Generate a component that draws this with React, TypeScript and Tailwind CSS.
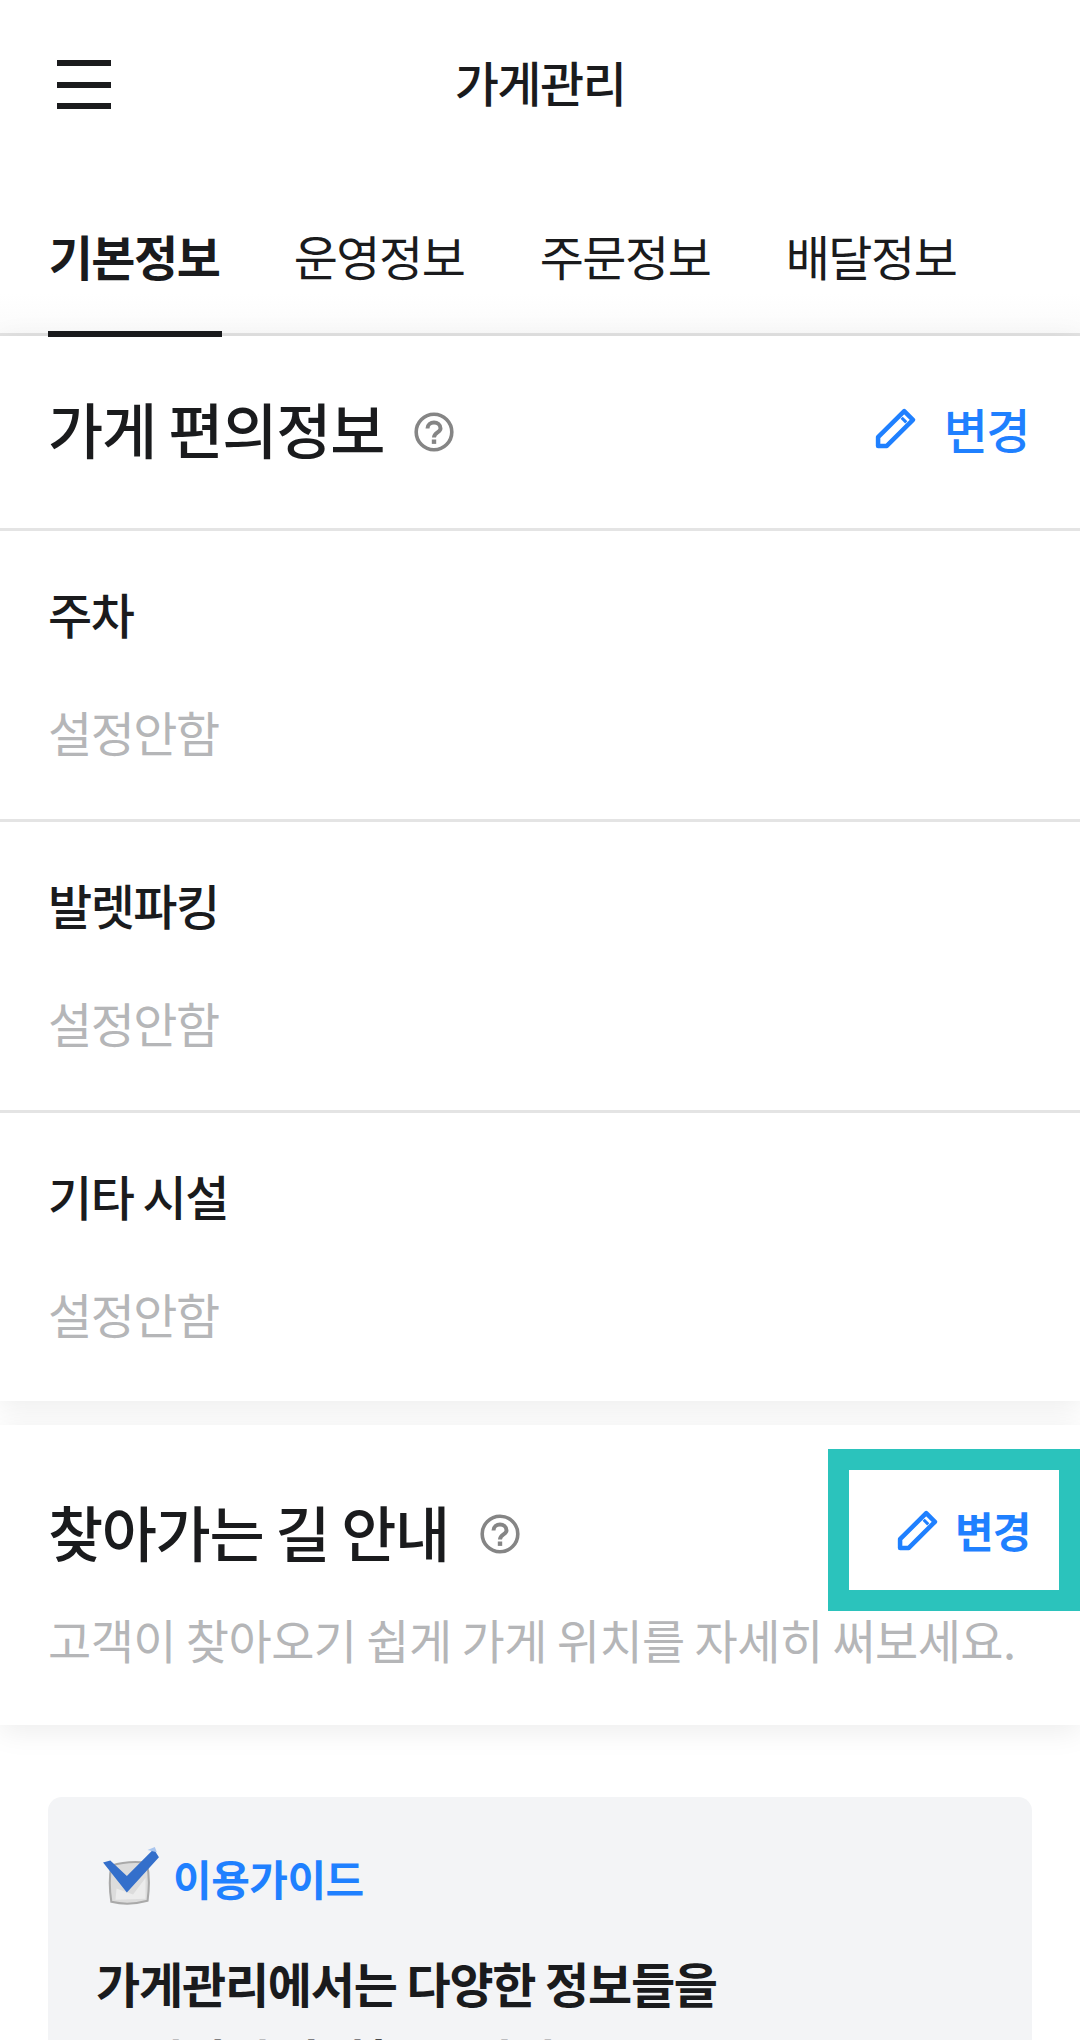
const KR = "font-['Noto_Sans_CJK_KR',sans-serif]";

function Pencil({ className }: { className: string }) {
  return (
    <svg viewBox="0 0 40 40" className={className} fill="none" stroke="#1f80ff" strokeWidth="4.4" strokeLinejoin="round">
      <path d="M3 28.5 L28.5 3 L37 11.5 L11.5 37 H3 Z" />
      <path d="M26 9.5 L30.5 14" strokeWidth="3" />
    </svg>
  );
}

function Help() {
  return (
    <svg viewBox="0 0 40 40" className="w-10 h-10" fill="none">
      <circle cx="20" cy="20" r="17.8" stroke="#858585" strokeWidth="3.6" />
      <path d="M13.5 16.5 C13.5 8.5 26.5 8.5 26.5 16.5 C26.5 20.5 20 20.5 20 25.5" stroke="#858585" strokeWidth="4" />
      <rect x="17.8" y="27.5" width="4.4" height="4.4" fill="#858585" />
    </svg>
  );
}

function CheckIcon() {
  return (
    <svg viewBox="0 0 56 58" className="w-[58px] h-[60px] shrink-0">
      <path d="M9 18 Q24 13 43 15 Q47 30 44 52 Q26 57 9 53 Q6 34 9 18 Z" fill="#dcdcdc" stroke="#a9a9a9" strokeWidth="2" />
      <path d="M14 40 L30 46 L42 30 L42 50 L13 51 Z" fill="#ececec" />
      <path d="M1 15 L8 13 L24 28 L50 2 L55 10 L24 44 Z" fill="#346fcb" />
      <path d="M44 3 L51 0 L53 5 Z" fill="#a9c5ee" />
    </svg>
  );
}

function Field({ label, h }: { label: string; h: string }) {
  return (
    <div className={`${h} px-12 pt-[50px] border-b-[3px] border-[#e4e4e4] last:border-b-0`}>
      <div className="text-[48px] leading-[64px] font-medium text-[#1a1b1d] tracking-[-1.5px]">{label}</div>
      <div className="mt-[54px] text-[48px] leading-[64px] text-[#b5b6b8] tracking-[-1.5px]">설정안함</div>
    </div>
  );
}

export default function App() {
  return (
    <div className={`${KR} w-[1080px] h-[2040px] overflow-hidden bg-white text-[#1a1b1d]`}>
      <header className="relative h-[168px] flex items-center justify-center">
        <div className="absolute left-[57px] top-[60px] w-[54px] h-[49px] flex flex-col justify-between">
          <div className="h-[6px] bg-[#1a1b1d]" />
          <div className="h-[6px] bg-[#1a1b1d]" />
          <div className="h-[6px] bg-[#1a1b1d]" />
        </div>
        <h1 className="text-[48px] leading-[64px] font-medium tracking-[-1.5px] -mt-[6px]">가게관리</h1>
      </header>

      <nav className="h-[168px] flex px-12 gap-[74px] text-[48px] tracking-[-1.5px] relative bg-gradient-to-b from-white from-75% to-[#fafafa]">
        <div className="absolute left-0 right-0 bottom-0 h-[3px] bg-[#e2e2e2]" />
        <div className="relative pt-[55px] font-bold leading-[64px] w-[174px] -mr-[3px] text-center">
          <span className="-ml-[2px]">기본정보</span>
          <div className="absolute left-0 right-0 -bottom-px h-[6px] bg-[#1a1b1d]" />
        </div>
        {["운영정보", "주문정보", "배달정보"].map((t) => (
          <div key={t} className="pt-[55px] leading-[64px] w-[172px] text-center">{t}</div>
        ))}
      </nav>

      <section className="shadow-[0_6px_28px_rgba(0,0,0,0.08)] relative">
        <div className="h-[195px] flex items-center px-12 border-b-[3px] border-[#e4e4e4]">
          <h2 className="text-[60px] leading-[72px] font-medium tracking-[-1.2px] -mt-[9px]">가게 편의정보</h2>
          <div className="ml-[30px]"><Help /></div>
          <div className="ml-auto pr-[1px] flex items-center gap-[28px] text-[#1f80ff] -mt-[8px]">
            <Pencil className="w-[41px] h-[41px]" />
            <span className="text-[48px] leading-[64px] font-medium tracking-[-1.5px] mr-[2px]">변경</span>
          </div>
        </div>
        <Field label="주차" h="h-[291px]" />
        <Field label="발렛파킹" h="h-[291px]" />
        <Field label="기타 시설" h="h-[288px]" />
      </section>

      <section className="mt-[24px] h-[300px] bg-white shadow-[0_6px_28px_rgba(0,0,0,0.08)] relative px-12 pt-[76px]">
        <div className="flex items-center">
          <h2 className="text-[60px] leading-[72px] font-medium tracking-[-1.4px] -mt-[6px]">찾아가는 길 안내</h2>
          <div className="ml-[31px]"><Help /></div>
        </div>
        <p className="mt-[40px] text-[47px] leading-[64px] text-[#b5b6b8] tracking-[-0.6px] whitespace-nowrap">고객이 찾아오기 쉽게 가게 위치를 자세히 써보세요.</p>
        <div className="absolute right-0 top-[24px] w-[252px] h-[162px] border-[21px] border-[#2bc3bc] bg-white flex items-center pl-[48px] gap-[17px] text-[#1f80ff]">
          <Pencil className="w-[41px] h-[41px]" />
          <span className="text-[42px] leading-[50px] font-bold tracking-[-1px]">변경</span>
        </div>
      </section>

      <section className="mt-[72px] mx-12 h-[400px] rounded-[14px] bg-[#f3f4f6] px-12 pt-[49px]">
        <div className="flex items-center gap-[13px] ml-[6px]">
          <CheckIcon />
          <span className="text-[42px] leading-[60px] font-bold text-[#1f80ff] tracking-[-0.5px] mt-[2px]">이용가이드</span>
        </div>
        <p className="mt-[36px] text-[48px] leading-[77px] font-bold tracking-[-1.2px]">
          가게관리에서는 다양한 정보들을
          <br />
          고객님께 안내할 수 있어요
        </p>
      </section>
    </div>
  );
}
